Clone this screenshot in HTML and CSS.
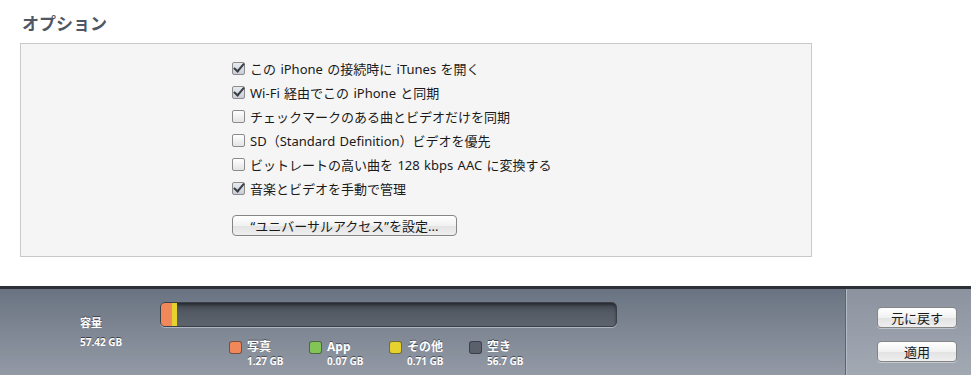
FILE: index.html
```html
<!DOCTYPE html>
<html lang="ja">

<head>
  <meta charset="UTF-8" />
  <title>オプション</title>
  <link rel="stylesheet" href="styles.css">
</head>

<body>
  <div class="options_section">
    <h2 class="heading">オプション</h2>
    <div class="options_panel">
      <ul class="option_list">
        <li class="option_row"><span class="check checked"></span>この iPhone の接続時に iTunes を開く</li>
        <li class="option_row"><span class="check checked"></span>Wi-Fi 経由でこの iPhone と同期</li>
        <li class="option_row"><span class="check"></span>チェックマークのある曲とビデオだけを同期</li>
        <li class="option_row"><span class="check"></span>SD（Standard Definition）ビデオを優先</li>
        <li class="option_row"><span class="check"></span>ビットレートの高い曲を 128 kbps AAC に変換する</li>
        <li class="option_row"><span class="check checked"></span>音楽とビデオを手動で管理</li>
      </ul>
      <button class="mac_button wide_button" type="button">“ユニバーサルアクセス”を設定...</button>
    </div>
  </div>

  <div class="capacity_bar">
    <div class="capacity_main">
      <div class="capacity_total">
        <div class="capacity_label">容量</div>
        <div class="capacity_size">57.42 GB</div>
      </div>
      <div class="capacity_usage">
        <div class="usage_track">
          <span class="usage_seg seg_photo"></span>
          <span class="usage_seg seg_app"></span>
          <span class="usage_seg seg_other"></span>
        </div>
        <div class="legend">
          <div class="legend_item">
            <span class="swatch swatch_photo"></span>
            <div><div class="legend_name">写真</div><div class="legend_size">1.27 GB</div></div>
          </div>
          <div class="legend_item">
            <span class="swatch swatch_app"></span>
            <div><div class="legend_name">App</div><div class="legend_size">0.07 GB</div></div>
          </div>
          <div class="legend_item">
            <span class="swatch swatch_other"></span>
            <div><div class="legend_name">その他</div><div class="legend_size">0.71 GB</div></div>
          </div>
          <div class="legend_item">
            <span class="swatch swatch_free"></span>
            <div><div class="legend_name">空き</div><div class="legend_size">56.7 GB</div></div>
          </div>
        </div>
      </div>
    </div>
    <div class="capacity_actions">
      <button class="mac_button small_button" type="button">元に戻す</button>
      <button class="mac_button small_button" type="button">適用</button>
    </div>
  </div>
</body>

</html>
```

FILE: styles.css
```css
body {
  font-family: "Noto Sans", "Noto Sans CJK JP", sans-serif;
  margin: 0;
  background: #fff;
  width: 971px;
  height: 375px;
  overflow: hidden;
}

.options_section {
  padding: 12px 0 0 20px;
  height: 274px;
}

.heading {
  margin: 0 0 8px 2px;
  font-size: 17px;
  line-height: 23px;
  font-weight: 700;
  color: #4f5764;
}

.options_panel {
  width: 792px;
  height: 214px;
  background: #f5f5f5;
  border: 1px solid #c9c9c9;
  padding-left: 211px;
  box-sizing: border-box;
}

.option_list {
  list-style: none;
  margin: 0;
  padding: 12px 0 0 0;
}

.option_row {
  display: flex;
  align-items: center;
  height: 24px;
  font-size: 13px;
  word-spacing: 1px;
  color: #1a1a1a;
}

.check {
  width: 11px;
  height: 11px;
  border: 1px solid #8c8c8c;
  border-radius: 2px;
  background: linear-gradient(#ffffff, #e4e4e4);
  margin-right: 5px;
  position: relative;
}

.check.checked {
  background: linear-gradient(#e8ebf0, #c9ced6);
}

.check.checked::after {
  content: "";
  position: absolute;
  left: 3px;
  top: -2px;
  width: 4px;
  height: 9px;
  border-right: 2px solid #3a3f47;
  border-bottom: 2px solid #3a3f47;
  transform: rotate(40deg);
}

.mac_button {
  font-family: "Noto Sans", "Noto Sans CJK JP", sans-serif;
  font-size: 13px;
  color: #1a1a1a;
  background: linear-gradient(#ffffff, #f1f1f1 50%, #e2e2e2 51%, #efefef);
  border: 1px solid #858585;
  border-radius: 4px;
  padding: 0;
  line-height: 18px;
  box-shadow: 0 1px 0 rgba(255, 255, 255, 0.4);
}

.wide_button {
  width: 225px;
  height: 21px;
  margin-top: 15px;
}

.capacity_bar {
  display: flex;
  height: 89px;
  border-top: 3px solid #2d3137;
  box-sizing: border-box;
}

.capacity_main {
  flex: 1;
  display: flex;
  background: linear-gradient(#6a7381, #7f8794 50%, #939aa6);
  border-right: 1px solid #5c6470;
}

.capacity_total {
  width: 80px;
  padding: 27px 0 0 80px;
  color: #fff;
  font-weight: 700;
  text-shadow: 0 -1px 0 rgba(30, 34, 42, 0.7);
}

.capacity_label {
  font-size: 11px;
  line-height: 14px;
}

.capacity_size {
  font-size: 10px;
  line-height: 14px;
  margin-top: 5px;
}

.capacity_usage {
  padding-top: 13px;
}

.usage_track {
  width: 457px;
  height: 25px;
  box-sizing: border-box;
  border-radius: 5px;
  background: linear-gradient(#3f454e, #545a64 40%, #5d646e);
  border: 1px solid #3b4048;
  box-shadow: 0 1px 0 rgba(210, 215, 222, 0.6), inset 0 2px 3px rgba(0, 0, 0, 0.4);
  display: flex;
  overflow: hidden;
}

.usage_seg {
  display: block;
  height: 100%;
}

.seg_photo {
  width: 10px;
  background: #f0885a;
}

.seg_app {
  width: 1px;
  background: #8cc05c;
}

.seg_other {
  width: 5px;
  background: #e6d12e;
}

.legend {
  display: flex;
  padding: 13px 0 0 69px;
}

.legend_item {
  width: 80px;
  display: flex;
  gap: 5px;
  color: #fff;
  font-weight: 700;
  text-shadow: 0 -1px 0 rgba(30, 34, 42, 0.6);
}

.swatch {
  width: 11px;
  height: 11px;
  margin-top: 1px;
  border-radius: 3px;
  border: 1px solid rgba(40, 44, 50, 0.6);
}

.swatch_photo {
  background: #f0885a;
}

.swatch_app {
  background: #82c556;
}

.swatch_other {
  background: #e6d12e;
}

.swatch_free {
  background: #5a616b;
}

.legend_name {
  font-size: 12px;
  line-height: 13px;
}

.legend_size {
  font-size: 10px;
  line-height: 12px;
  margin-top: 2px;
}

.capacity_actions {
  width: 125px;
  border-left: 1px solid #b4bac3;
  background: linear-gradient(#8c939f, #a3a9b3);
  display: flex;
  flex-direction: column;
  gap: 13px;
  padding: 18px 0 0 30px;
  box-sizing: border-box;
}

.small_button {
  width: 80px;
  height: 21px;
}
```
